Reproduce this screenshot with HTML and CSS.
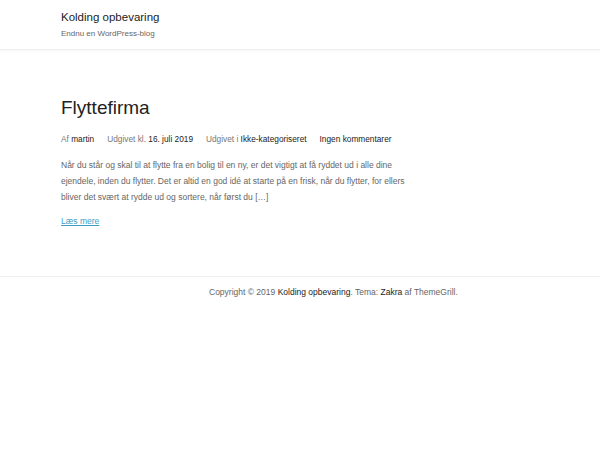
FILE: index.html
```html
<!DOCTYPE html>
<html lang="da">
	<head>
		<title>Kolding opbevaring</title>
		<meta charset="utf-8">
		<meta name="viewport" content="width=device-width, initial-scale=1">
		<link rel="stylesheet" href="styles.css">
	</head>
	<body>
		<header class="site-header">
			<div class="container">
				<p class="site-title"><a href="#">Kolding opbevaring</a></p>
				<p class="site-description">Endnu en WordPress-blog</p>
			</div>
		</header>

		<main class="site-content">
			<div class="container">
				<article class="post">
					<h2 class="entry-title">Flyttefirma</h2>
					<div class="entry-meta">
						<span>Af <a href="#">martin</a></span>
						<span>Udgivet kl. <a href="#">16. juli 2019</a></span>
						<span>Udgivet i <a href="#">Ikke-kategoriseret</a></span>
						<span><a href="#">Ingen kommentarer</a></span>
					</div>
					<div class="entry-summary">
						<p>Når du står og skal til at flytte fra en bolig til en ny, er det vigtigt at få ryddet ud i alle dine ejendele, inden du flytter. Det er altid en god idé at starte på en frisk, når du flytter, for ellers bliver det svært at rydde ud og sortere, når først du […]</p>
					</div>
					<a class="read-more" href="#">Læs mere</a>
				</article>
			</div>
		</main>

		<footer class="site-footer">
			<div class="footer-bar">
				<p>Copyright © 2019 <a href="#">Kolding opbevaring</a>. Tema: <a href="#">Zakra</a> af ThemeGrill.</p>
			</div>
		</footer>
	</body>
</html>
```

FILE: styles.css
```css
/*
 * RESET
 */
* { margin: 0; padding: 0; box-sizing: border-box; }
a { text-decoration: none; color: inherit; }

body {
	font-family: "Liberation Sans", Arial, sans-serif;
	background: #fff;
	color: #666;
}

.container { padding: 0 61px; }

/*
 * HEADER
 */
.site-header {
	height: 50px;
	padding-top: 10px;
	border-bottom: 1px solid #f0f0f0;
	box-shadow: 0 1px 3px rgba(0, 0, 0, 0.04);
}
.site-title { font-size: 11.5px; line-height: 15px; color: #222; }
.site-description { font-size: 8px; line-height: 12px; margin-top: 3px; color: #666; }

/*
 * CONTENT
 */
.site-content { padding: 46px 0 48px; }
.post { width: 352px; }

.entry-title {
	font-size: 19px; line-height: 24px;
	font-weight: normal; color: #222;
}
.entry-meta {
	display: flex; gap: 13px;
	margin-top: 13px;
	font-size: 8.3px; line-height: 12px;
	color: #777;
}
.entry-meta a { color: #222; }

.entry-summary {
	margin-top: 12px;
	font-size: 8.5px; line-height: 16px;
	color: #666;
}
.read-more {
	display: inline-block;
	margin-top: 10px;
	font-size: 8.5px; line-height: 12px;
	color: #3b9fc4;
	text-decoration: underline;
}

/*
 * FOOTER
 */
.site-footer { border-top: 1px solid #eee; }
.footer-bar {
	padding: 9px 0 0 209px;
	font-size: 8.5px; line-height: 12px;
	color: #666;
}
.footer-bar a { color: #222; }
```
